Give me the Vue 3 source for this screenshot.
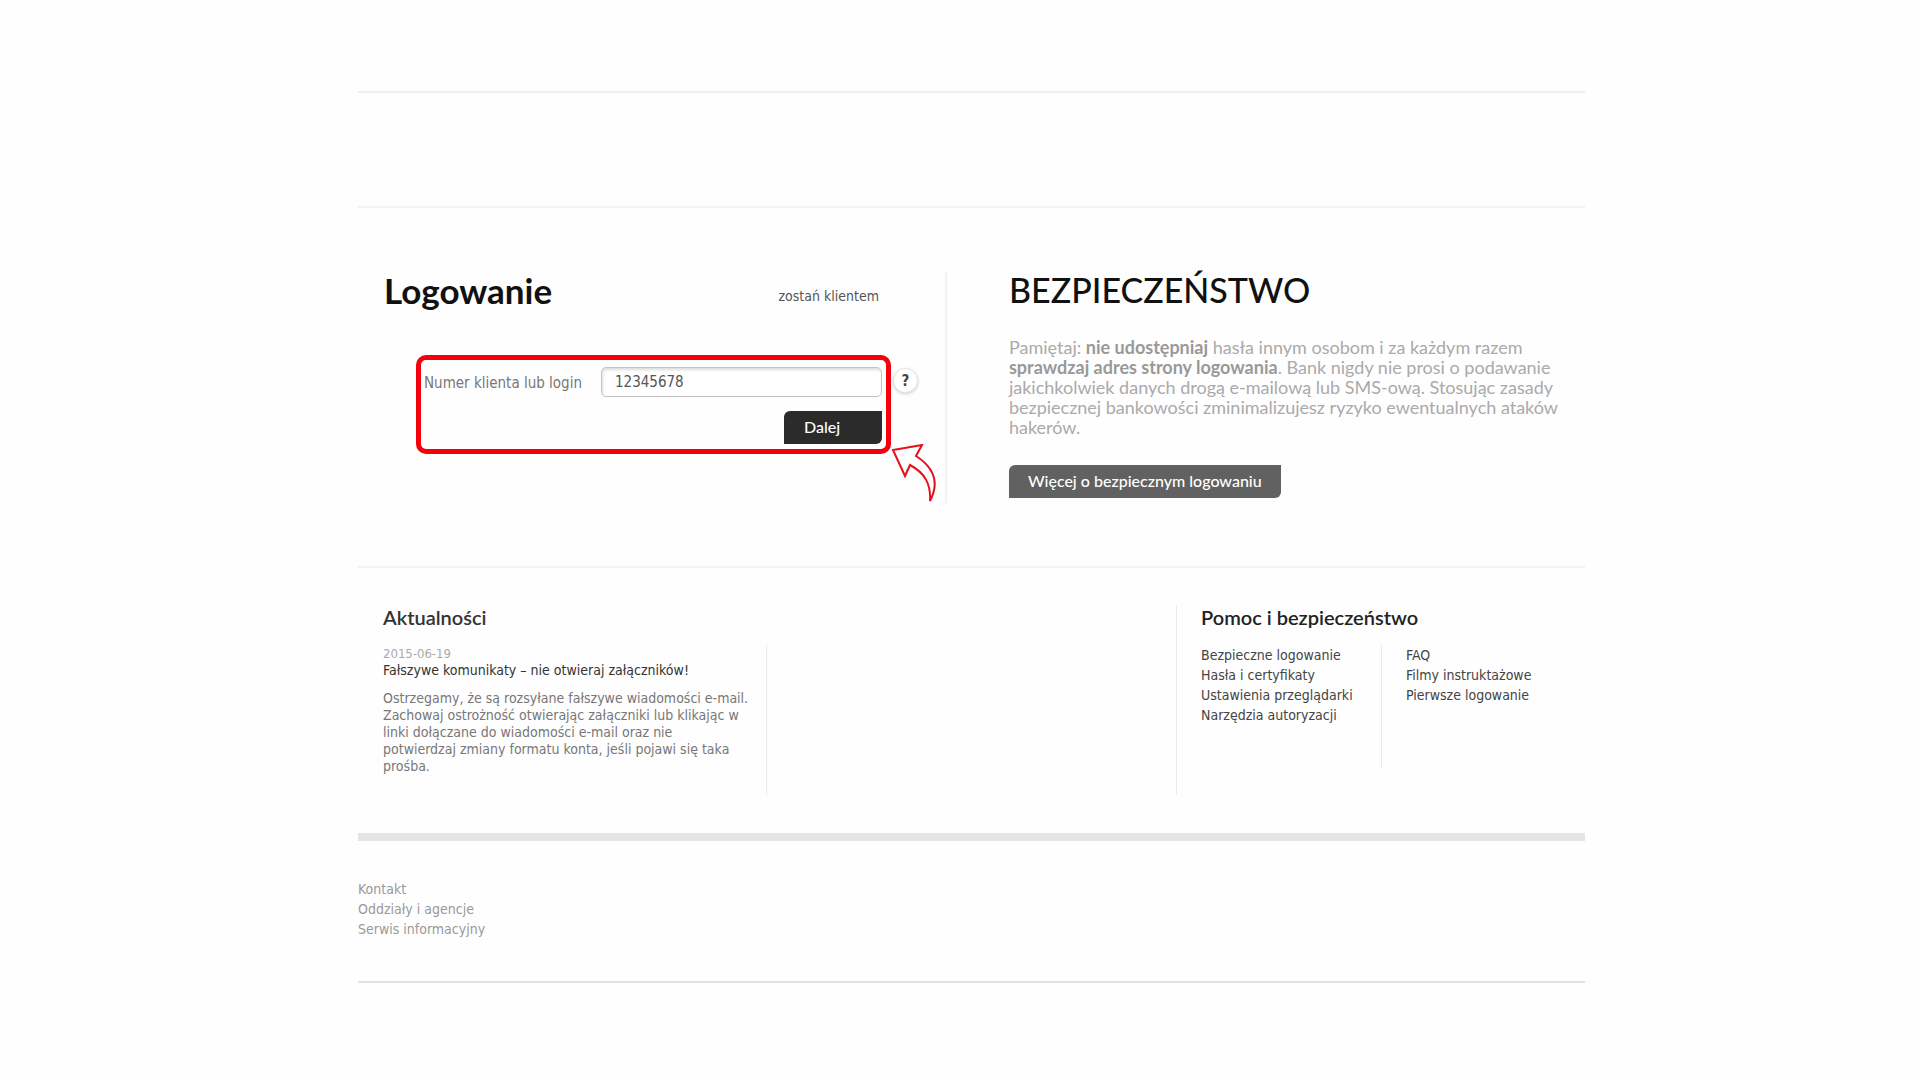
<template>
    <div class="page">
        <div class="top-strip"></div>

        <main>
            <section class="login-section">
                <div class="login">
                    <div class="login-head">
                        <h1>Logowanie</h1>
                        <a href="#" class="become-client">zostań klientem</a>
                    </div>

                    <div class="login-row">
                        <form class="login-form" @submit.prevent="submitLogin">
                            <div class="field">
                                <label for="login">Numer klienta lub login</label>
                                <input type="text" id="login" v-model="login" />
                            </div>
                            <button type="submit" class="btn btn-next">Dalej</button>
                        </form>
                        <button type="button" class="help" aria-label="Pomoc">?</button>
                        <svg class="arrow" width="46" height="60" viewBox="0 0 46 60" aria-hidden="true">
                            <path d="M2 6 L31 1 L25 12 C42 23 49 38 39 57 C40 40 34 29 19 21 L14 32 Z" />
                        </svg>
                    </div>
                </div>

                <div class="security">
                    <h2>BEZPIECZEŃSTWO</h2>
                    <p>
                        Pamiętaj: <strong>nie udostępniaj</strong> hasła innym osobom i za każdym razem<br />
                        <strong>sprawdzaj adres strony logowania</strong>. Bank nigdy nie prosi o podawanie<br />
                        jakichkolwiek danych drogą e-mailową lub SMS-ową. Stosując zasady<br />
                        bezpiecznej bankowości zminimalizujesz ryzyko ewentualnych ataków<br />
                        hakerów.
                    </p>
                    <a href="#" class="btn btn-more">Więcej o bezpiecznym logowaniu</a>
                </div>
            </section>

            <section class="info-section">
                <div class="news">
                    <h3>Aktualności</h3>
                    <article>
                        <time datetime="2015-06-19">2015-06-19</time>
                        <a href="#" class="news-title">Fałszywe komunikaty – nie otwieraj załączników!</a>
                        <p>
                            Ostrzegamy, że są rozsyłane fałszywe wiadomości e-mail.<br />
                            Zachowaj ostrożność otwierając załączniki lub klikając w<br />
                            linki dołączane do wiadomości e-mail oraz nie<br />
                            potwierdzaj zmiany formatu konta, jeśli pojawi się taka<br />
                            prośba.
                        </p>
                    </article>
                </div>

                <div class="support">
                    <h3>Pomoc i bezpieczeństwo</h3>
                    <div class="support-links">
                        <ul v-for="(column, i) in supportLinks" :key="i">
                            <li v-for="link in column" :key="link">
                                <a href="#">{{ link }}</a>
                            </li>
                        </ul>
                    </div>
                </div>
            </section>
        </main>

        <footer>
            <ul>
                <li v-for="link in footerLinks" :key="link">
                    <a href="#">{{ link }}</a>
                </li>
            </ul>
        </footer>
    </div>
</template>

<script setup>
import { ref } from "vue";

const login = ref("12345678");

const supportLinks = [
    ["Bezpieczne logowanie", "Hasła i certyfikaty", "Ustawienia przeglądarki", "Narzędzia autoryzacji"],
    ["FAQ", "Filmy instruktażowe", "Pierwsze logowanie"],
];

const footerLinks = ["Kontakt", "Oddziały i agencje", "Serwis informacyjny"];

const submitLogin = () => {
    login.value = login.value.trim();
};
</script>

<style>
body {
    background: #fefefe;
}
</style>

<style scoped>
.page {
    padding: 91px 335px 0 358px;
    font-family: "DejaVu Sans Condensed", "Noto Sans", sans-serif;
    font-size: 14px;
    line-height: 20px;
    color: #444;
}

h1,
h2,
h3,
p,
ul {
    margin: 0;
    padding: 0;
}

ul {
    list-style: none;
}

a {
    color: inherit;
    text-decoration: none;
}

h1,
h2 {
    font-family: Lato, sans-serif;
    font-size: 34px;
    line-height: 36px;
    color: #111;
}

h3 {
    font-family: Lato, sans-serif;
    font-size: 20px;
    line-height: 24px;
    font-weight: 600;
    color: #333;
}

.top-strip {
    height: 113px;
    border-top: 2px solid #eee;
    border-bottom: 2px solid #f2f2f2;
}

/* Logowanie */
.login-section {
    display: grid;
    grid-template-columns: 48fr 52fr;
    padding: 64px 0 63px;
    border-bottom: 2px solid #f2f2f2;
}

.login {
    min-height: 231px;
    padding-left: 26px;
    border-right: 2px solid #f2f2f2;
}

.login-head {
    display: flex;
    justify-content: space-between;
    align-items: flex-end;
    padding-right: 66px;
}

.login-head h1 {
    font-size: 35px;
    font-weight: 700;
}

.become-client {
    padding-bottom: 2px;
    color: #555;
}

.login-row {
    position: relative;
    display: flex;
    gap: 2px;
    margin-top: 47px;
    padding-left: 32px;
}

.login-form {
    display: flex;
    flex-direction: column;
    gap: 14px;
    box-sizing: border-box;
    width: 475px;
    padding: 7px 4px 5px 3px;
    border: 5px solid #f6000d;
    border-radius: 10px;
}

.field {
    display: flex;
    justify-content: space-between;
    align-items: center;
}

.field label {
    padding-top: 2px;
    font-size: 15px;
    color: #777;
}

.field input {
    box-sizing: border-box;
    width: 281px;
    height: 30px;
    padding: 0 13px;
    border: 1px solid #c4c4c4;
    border-radius: 5px;
    background: #fff;
    box-shadow: inset 1px 2px 3px #ddd;
    font-family: inherit;
    font-size: 15px;
    color: #555;
}

.btn {
    box-sizing: border-box;
    height: 33px;
    border: 0;
    border-radius: 6px 0;
    font-family: Lato, sans-serif;
    font-size: 16px;
    line-height: 32px;
    font-weight: 500;
    color: #fff;
}

.btn-next {
    align-self: flex-end;
    width: 98px;
    padding: 0 20px 2px;
    background: #2b2b2b;
    text-align: left;
}

.help {
    width: 25px;
    height: 25px;
    margin-top: 13px;
    padding: 0;
    border: 1px solid #e6e6e6;
    border-radius: 50%;
    background: #fff;
    box-shadow: 0 1px 3px #ccc;
    font-family: inherit;
    font-size: 15px;
    line-height: 20px;
    font-weight: 700;
    color: #444;
}

.arrow {
    position: absolute;
    top: 89px;
    left: 507px;
    fill: #fefefe;
    stroke: #e8101c;
    stroke-width: 2;
}

/* Bezpieczeństwo */
.security {
    padding-left: 62px;
    white-space: nowrap;
}

.security h2 {
    font-weight: 500;
}

.security p {
    margin: 29px 0 28px;
    font-family: Lato, sans-serif;
    font-size: 18px;
    line-height: 20px;
    color: #aaa;
}

.security strong {
    color: #999;
}

.btn-more {
    display: inline-block;
    padding: 0 19px;
    background: #616161;
}

/* Aktualności, pomoc */
.info-section {
    display: grid;
    grid-template-columns: repeat(3, 1fr);
    padding: 37px 0 38px;
    border-bottom: 8px solid #e4e4e4;
}

.news {
    padding-left: 25px;
    white-space: nowrap;
}

.news article {
    box-sizing: border-box;
    min-height: 150px;
    margin-top: 16px;
    border-right: 1px solid #eaeaea;
    line-height: 17px;
}

.news time,
.news-title {
    display: block;
}

.news time {
    font-size: 13px;
    color: #aaa;
}

.news-title {
    color: #333;
}

.news p {
    margin-top: 11px;
    color: #777;
}

.support {
    grid-column: 3;
    padding-left: 24px;
    border-left: 1px solid #eaeaea;
}

.support h3 {
    color: #222;
}

.support-links {
    display: grid;
    grid-template-columns: 180px 1fr;
    margin-top: 16px;
}

.support-links ul + ul {
    min-height: 123px;
    padding-left: 24px;
    border-left: 1px solid #eaeaea;
}

/* Stopka */
footer {
    padding: 38px 0 42px;
    border-bottom: 2px solid #e2e2e2;
    color: #999;
}
</style>
